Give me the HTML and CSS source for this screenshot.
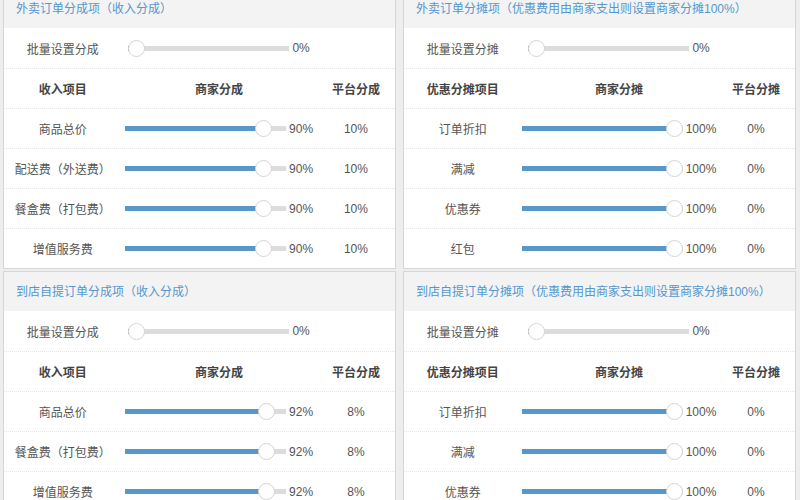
FILE: index.html
```html
<!DOCTYPE html>
<html lang="zh-CN">
<head>
<meta charset="utf-8">
<title>分成设置</title>
<link rel="stylesheet" href="styles.css">
</head>
<body>
<div class="page">
  <section class="panel">
    <div class="panel-title">外卖订单分成项（收入分成）</div>
    <div class="row">
      <div class="c1">批量设置分成</div>
      <div class="c2"><input class="range" type="range" min="0" max="100" value="0" style="--v:0"><span class="val">0%</span></div>
      <div class="c3"></div>
    </div>
    <div class="row head">
      <div class="c1">收入项目</div><div class="c2">商家分成</div><div class="c3">平台分成</div>
    </div>
    <div class="row">
      <div class="c1">商品总价</div>
      <div class="c2"><input class="range" type="range" min="0" max="100" value="90" style="--v:0.9"><span class="val">90%</span></div>
      <div class="c3">10%</div>
    </div>
    <div class="row">
      <div class="c1">配送费（外送费）</div>
      <div class="c2"><input class="range" type="range" min="0" max="100" value="90" style="--v:0.9"><span class="val">90%</span></div>
      <div class="c3">10%</div>
    </div>
    <div class="row">
      <div class="c1">餐盒费（打包费）</div>
      <div class="c2"><input class="range" type="range" min="0" max="100" value="90" style="--v:0.9"><span class="val">90%</span></div>
      <div class="c3">10%</div>
    </div>
    <div class="row">
      <div class="c1">增值服务费</div>
      <div class="c2"><input class="range" type="range" min="0" max="100" value="90" style="--v:0.9"><span class="val">90%</span></div>
      <div class="c3">10%</div>
    </div>
  </section>

  <section class="panel">
    <div class="panel-title">外卖订单分摊项（优惠费用由商家支出则设置商家分摊100%）</div>
    <div class="row">
      <div class="c1">批量设置分摊</div>
      <div class="c2"><input class="range" type="range" min="0" max="100" value="0" style="--v:0"><span class="val">0%</span></div>
      <div class="c3"></div>
    </div>
    <div class="row head">
      <div class="c1">优惠分摊项目</div><div class="c2">商家分摊</div><div class="c3">平台分摊</div>
    </div>
    <div class="row">
      <div class="c1">订单折扣</div>
      <div class="c2"><input class="range" type="range" min="0" max="100" value="100" style="--v:1"><span class="val">100%</span></div>
      <div class="c3">0%</div>
    </div>
    <div class="row">
      <div class="c1">满减</div>
      <div class="c2"><input class="range" type="range" min="0" max="100" value="100" style="--v:1"><span class="val">100%</span></div>
      <div class="c3">0%</div>
    </div>
    <div class="row">
      <div class="c1">优惠券</div>
      <div class="c2"><input class="range" type="range" min="0" max="100" value="100" style="--v:1"><span class="val">100%</span></div>
      <div class="c3">0%</div>
    </div>
    <div class="row">
      <div class="c1">红包</div>
      <div class="c2"><input class="range" type="range" min="0" max="100" value="100" style="--v:1"><span class="val">100%</span></div>
      <div class="c3">0%</div>
    </div>
  </section>

  <section class="panel">
    <div class="panel-title">到店自提订单分成项（收入分成）</div>
    <div class="row">
      <div class="c1">批量设置分成</div>
      <div class="c2"><input class="range" type="range" min="0" max="100" value="0" style="--v:0"><span class="val">0%</span></div>
      <div class="c3"></div>
    </div>
    <div class="row head">
      <div class="c1">收入项目</div><div class="c2">商家分成</div><div class="c3">平台分成</div>
    </div>
    <div class="row">
      <div class="c1">商品总价</div>
      <div class="c2"><input class="range" type="range" min="0" max="100" value="92" style="--v:0.92"><span class="val">92%</span></div>
      <div class="c3">8%</div>
    </div>
    <div class="row">
      <div class="c1">餐盒费（打包费）</div>
      <div class="c2"><input class="range" type="range" min="0" max="100" value="92" style="--v:0.92"><span class="val">92%</span></div>
      <div class="c3">8%</div>
    </div>
    <div class="row">
      <div class="c1">增值服务费</div>
      <div class="c2"><input class="range" type="range" min="0" max="100" value="92" style="--v:0.92"><span class="val">92%</span></div>
      <div class="c3">8%</div>
    </div>
  </section>

  <section class="panel">
    <div class="panel-title">到店自提订单分摊项（优惠费用由商家支出则设置商家分摊100%）</div>
    <div class="row">
      <div class="c1">批量设置分摊</div>
      <div class="c2"><input class="range" type="range" min="0" max="100" value="0" style="--v:0"><span class="val">0%</span></div>
      <div class="c3"></div>
    </div>
    <div class="row head">
      <div class="c1">优惠分摊项目</div><div class="c2">商家分摊</div><div class="c3">平台分摊</div>
    </div>
    <div class="row">
      <div class="c1">订单折扣</div>
      <div class="c2"><input class="range" type="range" min="0" max="100" value="100" style="--v:1"><span class="val">100%</span></div>
      <div class="c3">0%</div>
    </div>
    <div class="row">
      <div class="c1">满减</div>
      <div class="c2"><input class="range" type="range" min="0" max="100" value="100" style="--v:1"><span class="val">100%</span></div>
      <div class="c3">0%</div>
    </div>
    <div class="row">
      <div class="c1">优惠券</div>
      <div class="c2"><input class="range" type="range" min="0" max="100" value="100" style="--v:1"><span class="val">100%</span></div>
      <div class="c3">0%</div>
    </div>
    <div class="row">
      <div class="c1">红包</div>
      <div class="c2"><input class="range" type="range" min="0" max="100" value="100" style="--v:1"><span class="val">100%</span></div>
      <div class="c3">0%</div>
    </div>
  </section>
</div>
</body>
</html>
```

FILE: styles.css
```css
html, body {
  margin: 0;
  padding: 0;
  overflow: hidden;
  background: #eeeeee;
}

body {
  font-family: "Liberation Sans", "Noto Sans CJK SC", sans-serif;
  font-size: 12px;
  color: #555;
}

.page {
  display: grid;
  grid-template-columns: 393px 393px;
  column-gap: 7px;
  row-gap: 2px;
  align-items: start;
  padding: 0 0 0 3px;
  margin-top: -12px;
}

.panel {
  background: #fff;
  border: 1px solid #d6d6d6;
}

.panel-title {
  height: 39px;
  line-height: 37px;
  padding-top: 2px;
  box-sizing: border-box;
  padding-left: 12px;
  background: #f3f3f3;
  color: #5597cf;
  white-space: nowrap;
}

.row {
  display: grid;
  grid-template-columns: 3fr 5fr 2fr;
  height: 40px;
  align-items: center;
  border-top: 1px dotted #e6e6e6;
  box-sizing: border-box;
}

.panel-title + .row {
  border-top: none;
}

.row.head {
  font-weight: bold;
  color: #444;
}

.c1, .c3 {
  text-align: center;
  white-space: nowrap;
}

.c2 {
  display: flex;
  justify-content: center;
  align-items: center;
  gap: 3px;
  white-space: nowrap;
}

.head .c2 {
  display: block;
  text-align: center;
}

.val {
  color: #555;
}

.range {
  -webkit-appearance: none;
  appearance: none;
  width: 161px;
  height: 18px;
  margin: 0;
  padding: 0;
  background: transparent;
  outline: none;
}

.range::-webkit-slider-runnable-track {
  height: 5px;
  border-radius: 0;
  background: linear-gradient(to right,
    #5a97c9 0,
    #5a97c9 calc(8px + (100% - 16px) * var(--v)),
    #dcdcdc calc(8px + (100% - 16px) * var(--v)),
    #dcdcdc 100%);
}

.range::-webkit-slider-thumb {
  -webkit-appearance: none;
  appearance: none;
  width: 17px;
  height: 17px;
  margin-top: -6px;
  border-radius: 50%;
  background: #fff;
  border: 1px solid #d4d4d4;
  box-sizing: border-box;
}
```
